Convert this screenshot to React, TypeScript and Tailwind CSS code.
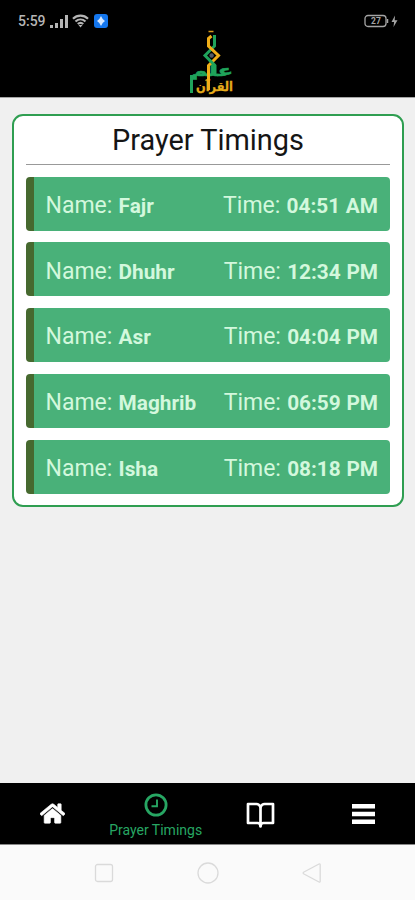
import { FaHome } from "react-icons/fa";
import type { ReactNode } from "react";

type Prayer = {
  name: string;
  time: string;
};

const PRAYERS: Prayer[] = [
  { name: "Fajr", time: "04:51 AM" },
  { name: "Dhuhr", time: "12:34 PM" },
  { name: "Asr", time: "04:04 PM" },
  { name: "Maghrib", time: "06:59 PM" },
  { name: "Isha", time: "08:18 PM" },
];

function StatusBar() {
  return (
    <div className="flex h-[42px] items-center justify-between pl-[18px] pr-[17px] text-[#b5b5b5]">
      <div className="flex items-center">
        <span className="w-[31px] text-[14px] font-medium leading-none">5:59</span>
        <svg className="ml-px h-[13px] w-[18px]" viewBox="0 0 18 13" fill="currentColor">
          <rect x="0" y="10" width="3" height="3" />
          <rect x="5" y="8" width="3" height="5" />
          <rect x="10" y="4" width="3" height="9" />
          <rect x="15" y="0" width="3" height="13" />
        </svg>
        <svg className="ml-1 h-[14px] w-[17px]" viewBox="0 0 17 14" fill="none" stroke="currentColor" strokeWidth="2.2">
          <path d="M1 4.8C5.2.6 11.8.6 16 4.8" />
          <path d="M3.5 7.5C6.4 4.8 10.6 4.8 13.5 7.5" />
          <path d="M5.8 10C7.4 8.4 9.6 8.4 11.2 10" />
          <path d="M6.500 11h4L8.500 13.500z" fill="currentColor" stroke="none" />
        </svg>
        <svg className="ml-[5px] h-[14px] w-[14px]" viewBox="0 0 14 14">
          <rect width="14" height="14" rx="3" fill="#1476ed" />
          <path d="M7 2l1.700 3L11 7 8.700 9 7 12 5.300 9 3 7l2.300-2z" fill="#d5e7ff" />
        </svg>
      </div>
      <svg className="h-[14px] w-[34px]" viewBox="0 0 34 14">
        <rect x="1" y="1.500" width="21" height="11" rx="3" fill="none" stroke="#a5a5a5" strokeWidth="1.300" />
        <path d="M23.500 5v4" stroke="#a5a5a5" strokeWidth="1.500" />
        <text x="12" y="10" textAnchor="middle" fontSize="8.500" fontWeight="700" fill="#a5a5a5">
          27
        </text>
        <path d="M31 1.500L27.500 8h2.600l-.6 5L33.500 6.200h-2.800z" fill="#a5a5a5" />
      </svg>
    </div>
  );
}

function Logo() {
  return (
    <svg className="h-[68px] w-[48px] overflow-visible" viewBox="187 29 48 68" fill="none">
      <text
        x="191"
        y="75.500"
        fontSize="15.500"
        fontWeight="700"
        fontFamily="DejaVu Sans"
        fill="#1fa35b"
        stroke="#1fa35b"
        strokeWidth="0.600"
        textLength="42"
        lengthAdjust="spacingAndGlyphs"
      >
        علم
      </text>
      <text
        x="196"
        y="90.500"
        fontSize="12.500"
        fontWeight="700"
        fontFamily="DejaVu Sans"
        fill="#e5ac1b"
        stroke="#e5ac1b"
        strokeWidth="0.300"
        textLength="37"
        lengthAdjust="spacingAndGlyphs"
      >
        القرآن
      </text>
      {/* interlaced ribbons */}
      <path d="M214.500 35v11L205 55.500 215 65.500v9" stroke="#1fa35b" strokeWidth="3" />
      <path d="M211.500 36l-3 2.500V46L218.500 55.500 208.500 65.500v24.500" stroke="#f0ae18" strokeWidth="3" />
      <path d="M209.500 60l4 4" stroke="#1fa35b" strokeWidth="3" />
      <path d="M208.500 31.500h5" stroke="#d99c1c" strokeWidth="1.500" />
      <path d="M191.500 75v18" stroke="#1fa35b" strokeWidth="3" />
      <circle cx="211.600" cy="55.500" r="2.200" fill="#555b67" />
    </svg>
  );
}

function PrayerRow({ prayer }: { prayer: Prayer }) {
  return (
    <div className="flex h-[54px] items-center justify-between rounded-[4px] border-l-8 border-[#46692f] bg-[#49b179] pl-[11.500px] pr-[12px] pt-[5px] text-[23px] text-[#d3f8dd] [word-spacing:0.500px]">
      <p>
        Name: <b className="text-[20.800px]">{prayer.name}</b>
      </p>
      <p>
        Time: <b className="text-[20.800px]">{prayer.time}</b>
      </p>
    </div>
  );
}

function Tab({ children }: { children: ReactNode }) {
  return <div className="flex flex-1 flex-col items-center justify-center">{children}</div>;
}

export default function App() {
  return (
    <div className="flex h-[900px] w-[415px] flex-col overflow-hidden bg-[#f0f0f0] font-['Roboto',sans-serif]">
      <header className="relative h-[98px] border-b border-[#a5a5a5] bg-black">
        <StatusBar />
        {/* logo hangs up between the status icons */}
        <div className="absolute left-[187px] top-[29px]">
          <Logo />
        </div>
      </header>

      <main className="flex-1 pl-[12px] pr-[11px] pt-4">
        <section className="h-[393px] rounded-[11px] border-2 border-[#2f9e51] bg-white px-[12px]">
          <h1 className="flex h-[49px] items-center justify-center border-b-[1.500px] border-[#999] pt-[2px] text-[28.900px] text-[#151515]">
            Prayer Timings
          </h1>
          <div className="mt-[11.500px] flex flex-col gap-[11.750px]">
            {PRAYERS.map((prayer) => (
              <PrayerRow key={prayer.name} prayer={prayer} />
            ))}
          </div>
        </section>
      </main>

      <nav className="flex h-[62px] border-b border-[#888] bg-black text-white">
        <Tab>
          <FaHome size={25} className="ml-[2px]" stroke="currentColor" strokeWidth={14} />
        </Tab>
        <Tab>
          <svg className="mt-[4px] h-6 w-6 shrink-0" viewBox="0 0 24 24" fill="none" stroke="#27a663">
            <circle cx="12" cy="12" r="10.100" strokeWidth="2.800" />
            <path d="M13 6.500v6.700H7.500" strokeWidth="1.900" />
          </svg>
          <span className="mt-[4px] text-[14px] leading-[18px] text-[#27a663]">Prayer Timings</span>
        </Tab>
        <Tab>
          <svg
            className="ml-[3px] mt-[3px] h-[26px] w-[29px]"
            viewBox="0 0 29 26"
            fill="none"
            stroke="currentColor"
            strokeWidth="2.700"
            strokeLinejoin="round"
          >
            <path d="M14.500 5C13.500 2.800 12.500 2 10.500 2H2v19h9.500c1.800 0 3 .8 3 3.500 0-2.700 1.200-3.500 3-3.500H27V2h-8.500c-2 0-3 .8-4 3z" />
            <path d="M14.500 5v19.500" />
          </svg>
        </Tab>
        <Tab>
          <svg className="h-5 w-[23px]" viewBox="0 0 23 20" fill="currentColor">
            <rect width="23" height="4.500" />
            <rect y="7.750" width="23" height="4.500" />
            <rect y="15.500" width="23" height="4.500" />
          </svg>
        </Tab>
      </nav>

      {/* system navigation keys */}
      <div className="flex h-[55px] items-center justify-center gap-[82px] bg-[#fafafa] text-[#dadada]">
        <svg className="h-[22px] w-[22px]" viewBox="0 0 22 22" fill="none" stroke="currentColor" strokeWidth="1.300">
          <rect x="2.500" y="2.500" width="17" height="17" rx="2" />
        </svg>
        <svg className="h-[22px] w-[22px]" viewBox="0 0 22 22" fill="none" stroke="currentColor" strokeWidth="1.300">
          <circle cx="11" cy="11" r="10" />
        </svg>
        <svg
          className="h-[22px] w-[22px]"
          viewBox="0 0 22 22"
          fill="none"
          stroke="currentColor"
          strokeWidth="1.300"
          strokeLinejoin="round"
        >
          <path d="M2.500 10.200Q1.800 11 2.500 11.800L18 20q1.200.5 1.200-.8V2.800Q19.200 1.500 18 2z" />
        </svg>
      </div>
    </div>
  );
}
